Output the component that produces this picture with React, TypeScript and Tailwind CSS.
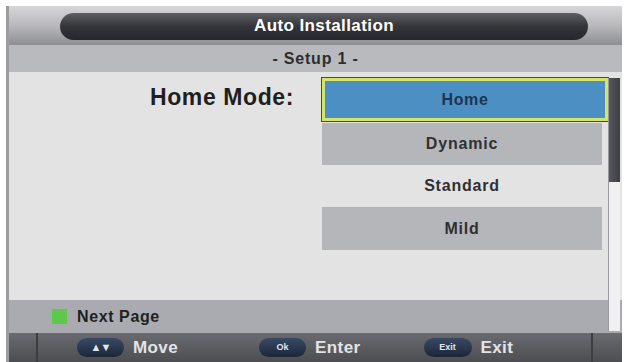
import React from "react";

const font = { fontFamily: '"Liberation Sans", Arial, sans-serif' };

function Pill({ children, w, t }: { children: React.ReactNode; w: string; t: string }) {
  return (
    <div
      className={`${w} ${t} h-[19px] rounded-full bg-gradient-to-b from-[#3a4a66] to-[#1c2638] flex items-center justify-center font-bold text-[#dfe6f0]`}
    >
      {children}
    </div>
  );
}

export default function App() {
  return (
    <div className="w-[626px] h-[362px] bg-white overflow-hidden" style={font}>
      <div className="ml-[6px] mt-[6px] w-[616px] h-[356px] flex flex-col bg-[#e3e3e3] border-l-[3px] border-[#9d9da0]">
        {/* header */}
        <div className="h-[39px] bg-gradient-to-b from-[#d6d6d8] via-[#b9b9bc] to-[#8e8f93] flex items-center pl-[51px] pr-[34px] pt-[1px]">
          <div className="flex-1 h-[27px] rounded-full bg-gradient-to-b from-[#5e5f63] via-[#34353a] to-[#26272b] flex items-center justify-center text-white text-[17px] font-bold tracking-[0.4px]">
            Auto Installation
          </div>
        </div>
        {/* setup row */}
        <div className="h-[27px] bg-[#b9babe] flex items-center justify-center text-[16px] font-bold tracking-[0.8px] text-[#2e2e30]">
          - Setup 1 -
        </div>
        {/* body */}
        <div className="relative flex-1 flex flex-col">
          <div className="flex-1 flex pt-[6px]">
            <div className="w-[287px] flex justify-end pr-[2px] pt-[2px]">
              <span className="text-[23px] font-bold tracking-[0.6px] text-[#1f1f21]">Home Mode:</span>
            </div>
            <div className="ml-[26px] w-[286px] flex flex-col">
              <div className="h-[43px] bg-[#4c90c3] border-[3px] border-[#d4e46a] outline outline-1 outline-[#4a4a30] flex items-center justify-center text-[16px] font-bold tracking-[0.6px] text-[#1d3550]">
                Home
              </div>
              <div className="mt-[2px] w-[280px] h-[42px] bg-[#b5b6ba] flex items-center justify-center text-[16px] font-bold tracking-[0.8px] text-[#303032]">
                Dynamic
              </div>
              <div className="w-[280px] h-[42px] flex items-center justify-center text-[16px] font-bold tracking-[0.8px] text-[#303032]">
                Standard
              </div>
              <div className="w-[280px] h-[43px] bg-[#b5b6ba] flex items-center justify-center text-[16px] font-bold tracking-[0.8px] text-[#303032]">
                Mild
              </div>
            </div>
          </div>
          <div className="h-[33px] bg-[#a9abb1] flex items-center pl-[43px]">
            <div className="w-[15px] h-[15px] bg-[#5ec84a] mr-[10px]" />
            <span className="text-[16px] font-bold tracking-[0.6px] text-[#1f1f21]">Next Page</span>
          </div>
          {/* scrollbar */}
          <div className="absolute right-[2px] top-[6px] bottom-[2px] w-[12px] bg-[#f0f0f2] border-l border-[#9a9a9e] flex flex-col">
            <div className="h-[104px] bg-gradient-to-r from-[#55565c] to-[#3e3f45]" />
          </div>
        </div>
        {/* footer */}
        <div className="h-[29px] bg-gradient-to-b from-[#6a6b70] to-[#4d4e52] flex items-center">
          <div className="w-[29px] h-full border-r-2 border-[#3c3d40]" />
          <div className="flex items-center ml-[39px]">
            <Pill w="w-[47px]" t="text-[11px] tracking-[-1px]">▲▼</Pill>
            <span className="ml-[9px] text-[17px] font-bold tracking-[0.4px] text-[#e4e4e6]">Move</span>
          </div>
          <div className="flex items-center ml-[81px]">
            <Pill w="w-[47px]" t="text-[9px]">Ok</Pill>
            <span className="ml-[9px] text-[17px] font-bold tracking-[0.4px] text-[#e4e4e6]">Enter</span>
          </div>
          <div className="flex items-center ml-[63px]">
            <Pill w="w-[48px]" t="text-[9px]">Exit</Pill>
            <span className="ml-[9px] text-[17px] font-bold tracking-[0.4px] text-[#e4e4e6]">Exit</span>
          </div>
          <div className="ml-auto w-[31px] h-full border-l-2 border-[#3c3d40]" />
        </div>
      </div>
    </div>
  );
}
